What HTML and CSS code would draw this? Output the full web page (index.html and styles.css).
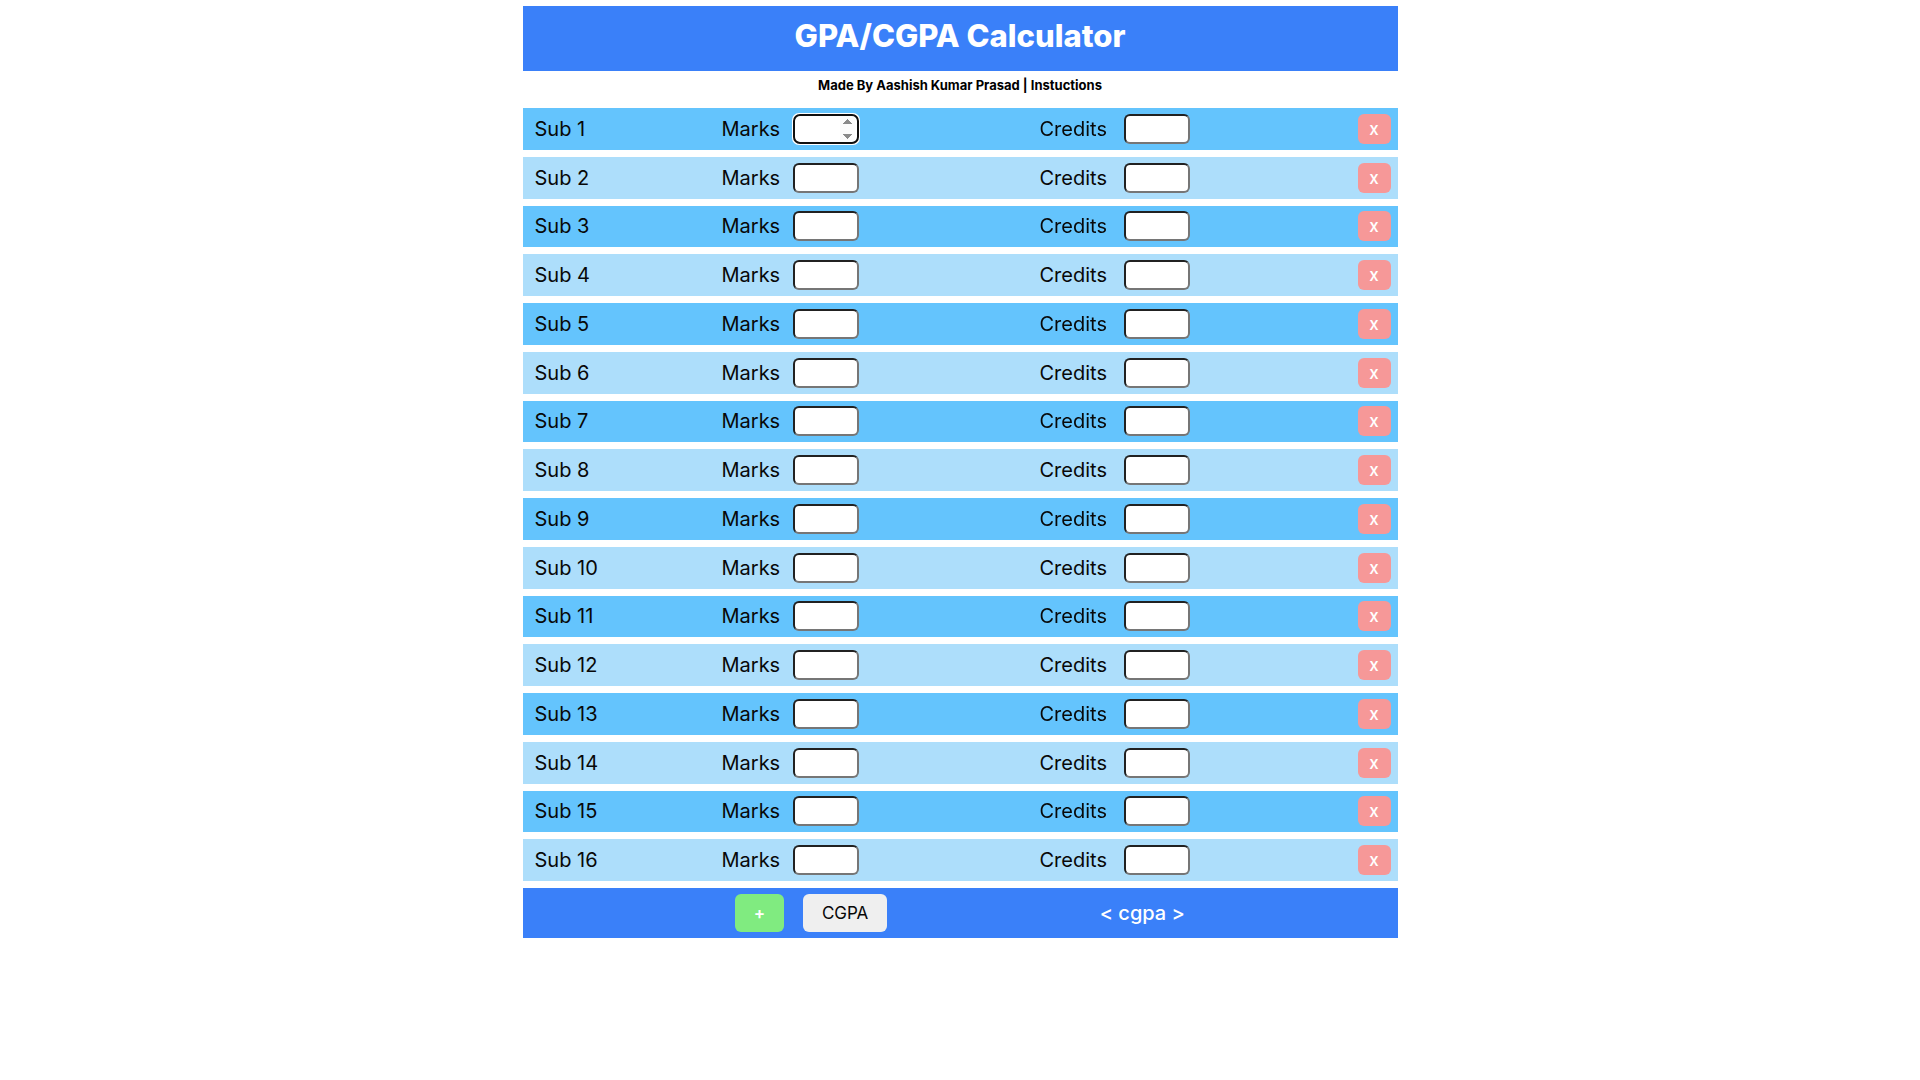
FILE: index.html
```html
<!DOCTYPE html>
<html lang="en">
<head>
<meta charset="utf-8">
<meta name="viewport" content="width=device-width, initial-scale=1">
<title>GPA/CGPA Calculator</title>
<link rel="stylesheet" href="styles.css">
</head>
<body>
<main class="calculator">
  <header class="banner"><h1 class="title">GPA/CGPA Calculator</h1></header>
  <p class="credit-line">Made By <a href="#author">Aashish Kumar Prasad</a> | <a href="#instructions">Instuctions</a></p>
  <form class="form">
    <div class="subjects" id="subjects"></div>
    <footer class="actions">
      <div class="buttons">
        <button type="button" class="btn btn-add">+</button>
        <button type="button" class="btn btn-calc">CGPA</button>
      </div>
      <output class="result">&lt; cgpa &gt;</output>
    </footer>
  </form>
</main>
<script src="script.js"></script>
</body>
</html>
```
FILE: styles.css
```css
* {
  box-sizing: border-box;
  margin: 0;
  padding: 0;
}

body {
  padding: 6px 0;
  background: #fff;
  color: #080808;
  font-family: Inter, "Open Sans", sans-serif;
}

.calculator {
  max-width: 875px;
  margin: 0 auto;
}

.banner {
  padding: 9px 12px 14px;
  background: #3a80f9;
  color: #fff;
  text-align: center;
}

.title {
  font-size: 31px;
  line-height: 42px;
  font-weight: 800;
}

.credit-line {
  padding: 4px 0 13px;
  font-size: 13px;
  line-height: 20px;
  font-weight: 700;
  text-align: center;
  color: #000;
}

.credit-line a {
  color: inherit;
  text-decoration: none;
}

.form {
  display: grid;
  gap: 7px;
}

.subjects {
  display: grid;
  grid-auto-rows: 1fr;
  gap: 7px;
  min-height: 773px;
}

.subject {
  display: grid;
  grid-template-columns: 187fr 318fr 318fr 33px;
  align-items: center;
  padding: 5px 7px 5px 12px;
  background: #addefb;
  font-size: 20px;
  line-height: 30px;
}

.subject:nth-child(odd) {
  background: #64c4fd;
}

.field {
  display: flex;
  align-items: center;
}

.label-marks {
  width: 71px;
}

.label-credits {
  width: 84px;
}

.number {
  width: 66px;
  height: 30px;
  padding: 1px 2px;
  border: 2px inset #767676;
  border-radius: 6px;
  background: #fff;
  font: inherit;
}

.number:focus::-webkit-inner-spin-button {
  opacity: 1;
}

.btn {
  border: 0;
  border-radius: 6px;
  font-family: inherit;
  font-size: 17px;
}

.btn-remove {
  height: 30px;
  background: #f69898;
  color: #fff;
  font-weight: 500;
}

.actions {
  display: flex;
  justify-content: space-evenly;
  align-items: center;
  padding: 6px 0;
  background: #3a80f9;
}

.buttons {
  display: flex;
  gap: 19px;
}

.btn-add {
  width: 49px;
  height: 38px;
  background: #80eb80;
  color: #fff;
  font-weight: 600;
}

.btn-calc {
  width: 84px;
  height: 38px;
  background: #efefef;
  color: #080808;
}

.result {
  color: #fff;
  font-size: 20px;
  line-height: 38px;
  font-weight: 500;
}
```
FILE: script.js
```js
const list = document.getElementById("subjects");

for (let n = 1; n <= 16; n++) {
  const row = document.createElement("div");
  row.className = "subject";
  row.innerHTML = `
    <span>Sub ${n}</span>
    <div class="field">
      <label class="label-marks" for="marks-${n}">Marks</label>
      <input class="number" type="number" id="marks-${n}">
    </div>
    <div class="field">
      <label class="label-credits" for="credits-${n}">Credits</label>
      <input class="number" type="number" id="credits-${n}">
    </div>
    <button type="button" class="btn btn-remove">x</button>`;
  list.append(row);
}

document.getElementById("marks-1").focus();
```
